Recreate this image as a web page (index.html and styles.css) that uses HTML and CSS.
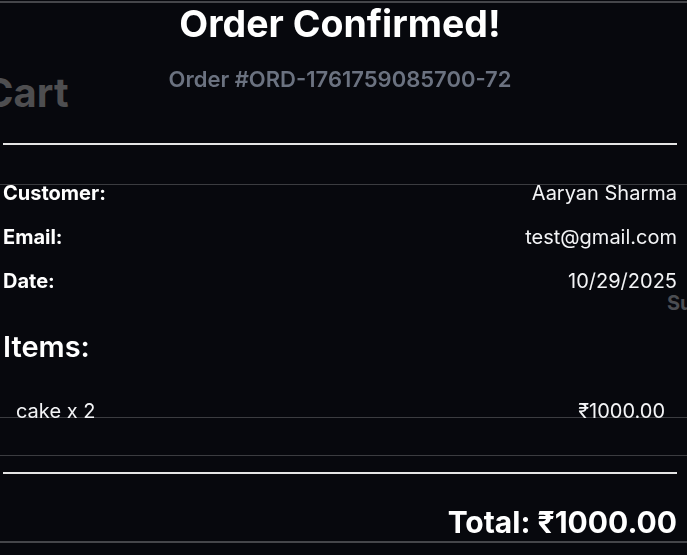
FILE: index.html
```html
<!DOCTYPE html>
<html lang="en">
<head>
<meta charset="utf-8">
<title>Order Confirmed</title>
<link rel="stylesheet" href="styles.css">
</head>
<body>
<div class="page">
  <div class="rule rule-top"></div>
  <h1 class="cart-title">Cart</h1>
  <div class="rule rule-a"></div>
  <div class="summary-peek">Su</div>
  <div class="rule rule-b"></div>
  <div class="rule rule-c"></div>
  <div class="rule rule-bottom"></div>
</div>

<div class="modal">
  <div class="modal-content">
    <h2 class="title">Order Confirmed!</h2>
    <p class="order-no">Order #ORD-1761759085700-72</p>
    <hr class="divider divider-top">
    <div class="info-row"><span class="label">Customer:</span><span class="value">Aaryan Sharma</span></div>
    <div class="info-row"><span class="label">Email:</span><span class="value">test@gmail.com</span></div>
    <div class="info-row"><span class="label">Date:</span><span class="value">10/29/2025</span></div>
    <h3 class="items-title">Items:</h3>
    <div class="item-row"><span>cake x 2</span><span>₹1000.00</span></div>
    <hr class="divider divider-bottom">
    <div class="total">Total: ₹1000.00</div>
  </div>
</div>
</body>
</html>
```

FILE: styles.css
```css
* { box-sizing: border-box; }
html, body {
  margin: 0;
  padding: 0;
  background: #07080d;
  font-family: Inter, "Noto Sans", sans-serif;
  overflow: hidden;
}
.page {
  width: 687px;
  height: 555px;
  display: flex;
  flex-direction: column;
}
.rule {
  height: 1px;
  background: #3b3c40;
  flex: none;
}
.rule-top { margin-top: 1px; height: 2px; background: #45464a; }
.cart-title {
  margin: 62px 0 0 -16px;
  font-size: 40px;
  line-height: 56px;
  font-weight: 700;
  color: #4e4e50;
  height: 119px;
}
.summary-peek {
  margin-top: 106px;
  align-self: flex-end;
  margin-right: -20px;
  width: 40px;
  font-size: 20px;
  line-height: 24px;
  font-weight: 700;
  color: #4b4d52;
}
.rule-b { margin-top: 102px; }
.rule-c { margin-top: 37px; }
.rule-bottom { margin-top: 85px; height: 2px; background: #45464a; }

.modal {
  position: fixed;
  inset: 0;
}
.modal-content {
  padding: 0 10px 0 3px;
  color: #fff;
}
.title {
  margin: 4px 0 0;
  font-size: 37.5px;
  line-height: 40px;
  font-weight: 700;
  text-align: center;
}
.order-no {
  margin: 21px 0 0;
  font-size: 22px;
  line-height: 28px;
  font-weight: 600;
  color: #6b7280;
  text-align: center;
}
.divider {
  border: 0;
  height: 2px;
  background: #e5e5e5;
  margin: 0;
}
.divider-top { margin-top: 50px; }
.info-row {
  display: flex;
  justify-content: space-between;
  font-size: 20px;
  line-height: 28px;
  margin-top: 16px;
}
.divider-top + .info-row { margin-top: 34px; }
.label { font-weight: 700; }
.value { color: #f3f4f6; }
.items-title {
  margin: 34px 0 0;
  font-size: 29px;
  line-height: 36px;
  font-weight: 600;
}
.item-row {
  display: flex;
  justify-content: space-between;
  padding: 12px 12px 12px 13px;
  margin-top: 20px;
  font-size: 20px;
  line-height: 28px;
  color: #f3f4f6;
}
.divider-bottom { margin-top: 35px; }
.total {
  margin-top: 30px;
  text-align: right;
  font-size: 30px;
  line-height: 36px;
  font-weight: 700;
}
```
